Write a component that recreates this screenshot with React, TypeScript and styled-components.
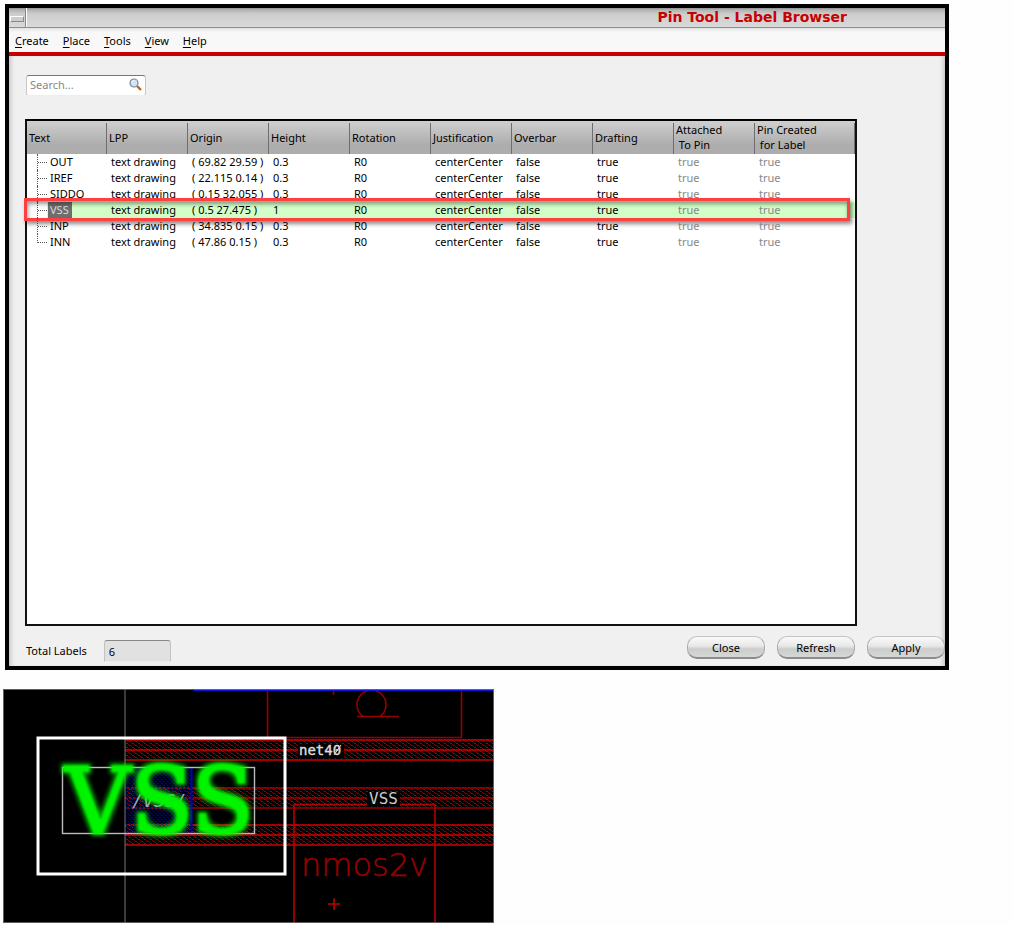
import React from "react";
import styled, { createGlobalStyle } from "styled-components";

const GlobalStyle = createGlobalStyle`
  * { box-sizing: border-box; }
  body {
    margin: 0;
    background: #fefefe;
    color: #000;
    font: 11px/15px "Noto Sans", "Open Sans", sans-serif;
  }
  button, input { font: inherit; color: inherit; }
`;

const Page = styled.main`
  display: flex;
  flex-direction: column;
  align-items: flex-start;
  gap: 19px;
  padding: 4px 64px 0 5px;
`;

const Window = styled.section`
  width: 100%;
  border: 4px solid #000;
  background: #f1f0f1;
`;

const TitleBar = styled.header`
  display: flex;
  align-items: stretch;
  height: 20px;
  border-bottom: 1px solid #8c8e8c;
  background: linear-gradient(#8e908e 0, #b4b4b4 2px, #cdcdcd 6px, #dadada 19px);
`;

const WindowMenu = styled.button`
  display: flex;
  align-items: center;
  justify-content: center;
  width: 17px;
  padding: 2px 0 0;
  border: 0;
  border-right: 1px solid #888;
  background: transparent;
  box-shadow: 1px 0 0 #fff;
  &::before {
    content: "";
    width: 12px;
    height: 4px;
    border: 1px solid;
    border-color: #fff #8a8a8a #8a8a8a #fff;
    background: #ccc;
  }
`;

const Title = styled.h1`
  flex: 1;
  margin: 0;
  padding-right: 98px;
  text-align: right;
  color: #c80000;
  font: bold 14px/18px "DejaVu Sans", sans-serif;
`;

const MenuBar = styled.nav`
  display: flex;
  align-items: center;
  gap: 14px;
  height: 28px;
  padding: 0 6px;
  border-bottom: 4px solid #c80000;
  background: linear-gradient(#e2e2e2, #f9f8f9 4px);
`;

const MenuItem = styled.button`
  padding: 2px 0 0;
  border: 0;
  background: none;
  line-height: 18px;
  &::first-letter {
    text-decoration: underline;
    text-underline-offset: 2px;
  }
`;

const Body = styled.div`
  padding: 19px 0 4px 16px;
  box-shadow: inset 5px 0 4px -3px #c4c4c4, inset -5px 0 4px -3px #c4c4c4;
`;

const SearchBox = styled.label`
  display: flex;
  align-items: center;
  width: 120px;
  height: 21px;
  margin-left: 1px;
  padding: 0 3px 2px;
  border: 1px solid #c8c8c8;
  border-top-color: #777;
  border-bottom-color: #eee;
  border-radius: 3px;
  background: #fff;
`;

const SearchInput = styled.input`
  flex: 1;
  min-width: 0;
  padding: 0;
  border: 0;
  outline: 0;
  background: transparent;
  &::placeholder { color: #888; opacity: 1; }
`;

const TableFrame = styled.div`
  height: 507px;
  margin: 23px 88px 0 0;
  border: 2px solid #111;
  border-top-color: #000;
  background: #fff;
`;

const Table = styled.table`
  width: 100%;
  table-layout: fixed;
  border-collapse: separate;
  border-spacing: 0;
`;

const HeadCell = styled.th`
  height: 33px;
  padding: 0 0 1px 2px;
  text-align: left;
  font-weight: normal;
  white-space: pre;
  background:
    linear-gradient(#6e6e6e, #6e6e6e) right bottom / 1px 31px no-repeat,
    linear-gradient(#cfcfcf, #aeadae 24px);
`;

const Row = styled.tr<{ $selected?: boolean }>`
  position: relative;
  background: ${(p) => (p.$selected ? "#d2ffc8" : "transparent")};
`;

const Cell = styled.td<{ $muted?: boolean }>`
  height: 16px;
  padding: 0 0 0 4px;
  line-height: 16px;
  white-space: pre;
  color: ${(p) => (p.$muted ? "#888" : "#000")};
`;

const TreeCell = styled(Cell)`
  padding: 0;
`;

const TreeNode = styled.div<{ $last: boolean; $selected: boolean }>`
  display: flex;
  height: 16px;
  padding-left: 10px;
  background: ${(p) => (p.$selected ? "linear-gradient(#fff, #fff) left / 20px 100% no-repeat" : "none")};
  &::before {
    content: "";
    width: 10px;
    height: ${(p) => (p.$last ? 9 : 16)}px;
    border-left: 1px dotted #555;
    background: repeating-linear-gradient(90deg, #555 0 1px, transparent 1px 2px) left 0 top 8px / 100% 1px no-repeat;
  }
`;

const NodeLabel = styled.span<{ $selected: boolean }>`
  padding: 0 3px 0 2px;
  color: ${(p) => (p.$selected ? "#ddd" : "#000")};
  background: ${(p) => (p.$selected ? "#6e6e6e" : "transparent")};
`;

const Callout = styled.span`
  position: absolute;
  inset: -4px 5px -3px -3px;
  border: 3px solid #ff4040;
  box-shadow: 2px 3px 4px rgba(0, 0, 0, 0.45), inset 1px 3px 4px rgba(0, 0, 0, 0.4);
  pointer-events: none;
`;

const Footer = styled.footer`
  display: flex;
  align-items: flex-start;
  padding-top: 10px;
`;

const TotalLabel = styled.label`
  display: flex;
  flex: 1;
  align-items: flex-start;
  gap: 17px;
  padding: 4px 0 0 1px;
  line-height: 21px;
`;

const TotalField = styled.input`
  width: 67px;
  height: 22px;
  padding: 1px 4px 0;
  border: 1px solid #c2c2c2;
  border-top-color: #888;
  border-bottom-color: #eee;
  border-radius: 3px 3px 0 0;
  background: #e2e1e2;
`;

const ButtonRow = styled.div`
  display: flex;
  gap: 12px;
`;

const PushButton = styled.button`
  width: 78px;
  height: 23px;
  padding: 0;
  border: 1px solid #aaa;
  border-top-color: #c4c4c4;
  border-bottom: 2px solid #8a8d8a;
  border-radius: 10px;
  background: linear-gradient(#fafafa, #e8e8e8 45%, #cbcdcb 60%, #d6d8d6);
`;

const Layout = styled.svg`
  display: block;
  width: 491px;
  max-width: 100%;
  height: auto;
  margin-left: -2px;
`;

const menus = ["Create", "Place", "Tools", "View", "Help"];

const columns = [
  { title: "Text", width: 80 },
  { title: "LPP", width: 81 },
  { title: "Origin", width: 81 },
  { title: "Height", width: 81 },
  { title: "Rotation", width: 81 },
  { title: "Justification", width: 81 },
  { title: "Overbar", width: 81 },
  { title: "Drafting", width: 81 },
  { title: "Attached\n To Pin", width: 81 },
  { title: "Pin Created\n for Label" },
];

const labels = [
  { text: "OUT", origin: "( 69.82 29.59 )", height: "0.3" },
  { text: "IREF", origin: "( 22.115 0.14 )", height: "0.3" },
  { text: "SIDDO", origin: "( 0.15 32.055 )", height: "0.3" },
  { text: "VSS", origin: "( 0.5 27.475 )", height: "1", selected: true },
  { text: "INP", origin: "( 34.835 0.15 )", height: "0.3" },
  { text: "INN", origin: "( 47.86 0.15 )", height: "0.3" },
];

function SearchIcon() {
  return (
    <svg width="13" height="13" viewBox="0 0 13 13" aria-hidden="true">
      <path d="M8 8l4 4" stroke="#b5651d" strokeWidth="2.4" />
      <circle cx="5" cy="5" r="4" fill="#cfe2f8" stroke="#7d8794" strokeWidth="1.2" />
      <path d="M3 4.500a2.400 2.400 0 0 1 2-1.800" fill="none" stroke="#fff" />
    </svg>
  );
}

function Rail({ y, color }: { y: number; color: string }) {
  return (
    <g>
      <rect x="122" y={y} width="369" height="20" fill="url(#redHatch)" />
      <path d={`M122 ${y + 1}H491M122 ${y + 11}H491M122 ${y + 21}H491`} stroke={color} strokeWidth="1.6" />
    </g>
  );
}

function LayoutView() {
  return (
    <Layout viewBox="0 0 491 234" role="img" aria-label="Layout canvas">
      <defs>
        <pattern id="redHatch" width="6" height="4" patternUnits="userSpaceOnUse">
          <path d="M0 0h2v1H0zM3 2h2v1H3z" fill="#960000" />
          <path d="M2 1h1v1H2zM5 3h1v1H5z" fill="#780000" />
          <path d="M4 0h1v1H4zM1 2h1v1H1z" fill="#300000" />
        </pattern>
        <pattern id="blueHatch" width="4" height="4" patternUnits="userSpaceOnUse">
          <path d="M0 0h2v1H0zM2 2h2v1H2z" fill="#000088" />
          <path d="M1 1h1v1H1zM3 3h1v1H3z" fill="#000050" />
        </pattern>
        <filter id="glow" x="-10%" y="-20%" width="120%" height="140%">
          <feMorphology in="SourceGraphic" operator="dilate" radius="2" result="fat" />
          <feGaussianBlur in="fat" stdDeviation="2" result="halo" />
          <feComponentTransfer in="halo" result="dimHalo">
            <feFuncA type="linear" slope="0.65" />
          </feComponentTransfer>
          <feGaussianBlur in="SourceGraphic" stdDeviation="1" result="core" />
          <feMerge>
            <feMergeNode in="dimHalo" />
            <feMergeNode in="core" />
          </feMerge>
        </filter>
      </defs>
      <rect width="491" height="234" fill="#000" />
      <Rail y={50} color="#d00000" />
      <Rail y={98} color="#a00000" />
      <Rail y={135} color="#d00000" />
      <g fill="none" stroke="#960000" strokeWidth="1.6">
        <path d="M264.5 1V48.5H458.5V1M330.5 1V6" />
        <path d="M354 27.5H396M360 27.5A14.5 14.5 0 1 1 377 27.5" />
        <path d="M291 234V115.5H432V234" stroke="#b40000" />
        <path d="M325 215H337M331 209.5V221" stroke="#c00000" />
      </g>
      <path d="M191 1H491" stroke="#1010d8" strokeWidth="2" />
      <rect x="123" y="79" width="65" height="65" fill="url(#blueHatch)" />
      <path d="M188.5 79V144" stroke="#0000c0" strokeWidth="2" />
      <path d="M122 0V234" stroke="#777" />
      <text x="129" y="118" fill="#aaa" fontFamily="DejaVu Sans Mono, monospace" fontStyle="italic" fontSize="18">/VSS/</text>
      <rect x="59.5" y="78.5" width="192" height="66" fill="none" stroke="#bbb" strokeWidth="1.4" />
      <text
        x="62"
        y="144"
        fill="#00f400"
        stroke="#00f400"
        strokeWidth="2"
        strokeLinejoin="round"
        fontFamily="DejaVu Serif, serif"
        fontSize="91"
        filter="url(#glow)"
      >
        VSS
      </text>
      <rect x="35" y="49" width="247" height="136" fill="none" stroke="#fff" strokeWidth="3" />
      <rect x="295" y="55" width="46" height="14" fill="#000" />
      <text x="296" y="66" fill="#ddd" stroke="#ddd" strokeWidth="0.4" fontFamily="DejaVu Sans Mono, monospace" fontSize="14">net40</text>
      <path d="M331 66L338 56" stroke="#ddd" />
      <rect x="364" y="103" width="33" height="14" fill="#000" />
      <text x="366" y="115" fill="#ccc" fontFamily="DejaVu Sans Mono, monospace" fontSize="16">VSS</text>
      <text x="298" y="187" fill="#960000" stroke="#960000" strokeWidth="0.5" fontFamily="DejaVu Sans, sans-serif" fontWeight="200" fontSize="32">nmos2v</text>
      <rect x="0.5" y="0.5" width="490" height="233" fill="none" stroke="#777" strokeOpacity="0.8" />
    </Layout>
  );
}

export default function App() {
  return (
    <>
      <GlobalStyle />
      <Page>
        <Window>
          <TitleBar>
            <WindowMenu aria-label="Window menu" />
            <Title>Pin Tool - Label Browser</Title>
          </TitleBar>
          <MenuBar>
            {menus.map((name) => (
              <MenuItem key={name}>{name}</MenuItem>
            ))}
          </MenuBar>
          <Body>
            <SearchBox>
              <SearchInput type="text" placeholder="Search..." aria-label="Search" />
              <SearchIcon />
            </SearchBox>
            <TableFrame>
              <Table>
                <colgroup>
                  {columns.map((c) => (
                    <col key={c.title} width={c.width} />
                  ))}
                </colgroup>
                <thead>
                  <tr>
                    {columns.map((c) => (
                      <HeadCell key={c.title}>{c.title}</HeadCell>
                    ))}
                  </tr>
                </thead>
                <tbody>
                  {labels.map((l, i) => (
                    <Row key={l.text} $selected={l.selected}>
                      <TreeCell>
                        <TreeNode $last={i === labels.length - 1} $selected={!!l.selected}>
                          <NodeLabel $selected={!!l.selected}>{l.text}</NodeLabel>
                        </TreeNode>
                        {l.selected && <Callout />}
                      </TreeCell>
                      <Cell>text drawing</Cell>
                      <Cell>{l.origin}</Cell>
                      <Cell>{l.height}</Cell>
                      <Cell>R0</Cell>
                      <Cell>centerCenter</Cell>
                      <Cell>false</Cell>
                      <Cell>true</Cell>
                      <Cell $muted>true</Cell>
                      <Cell $muted>true</Cell>
                    </Row>
                  ))}
                </tbody>
              </Table>
            </TableFrame>
            <Footer>
              <TotalLabel>
                Total Labels
                <TotalField type="text" readOnly value="6" />
              </TotalLabel>
              <ButtonRow>
                <PushButton>Close</PushButton>
                <PushButton>Refresh</PushButton>
                <PushButton>Apply</PushButton>
              </ButtonRow>
            </Footer>
          </Body>
        </Window>
        <LayoutView />
      </Page>
    </>
  );
}
